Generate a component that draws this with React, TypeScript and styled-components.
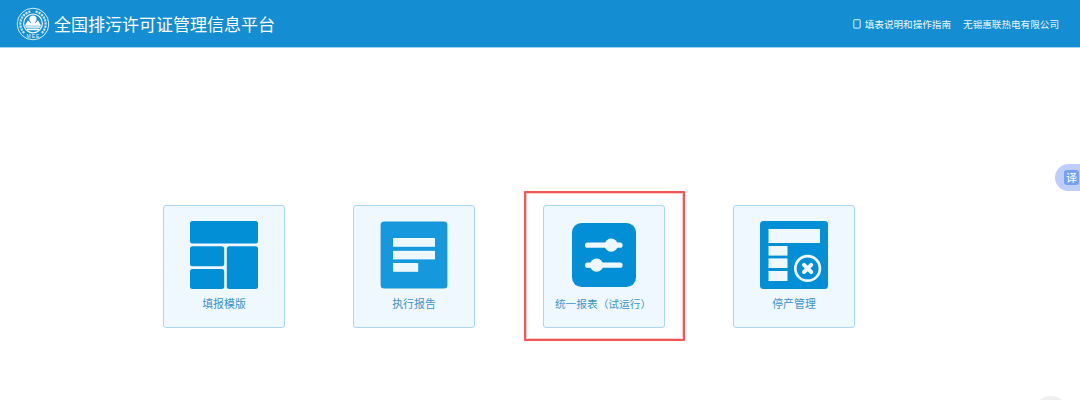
import React from 'react';
import styled, { createGlobalStyle } from 'styled-components';

// Styles
const colors = {
  header: '#148dd2',
  icon: '#028fd5',
  iconLight: '#1598dc',
  card: '#eff8fe',
  text: '#3a94cb',
  red: '#f25656',
};

const GlobalStyle = createGlobalStyle`
  body {
    margin: 0;
    background: #fff;
    font-family: 'Noto Sans CJK SC', sans-serif;
  }
`;

const Page = styled.div`
  position: relative;
  height: 400px;
  overflow: hidden;
  background: #fff;
`;

const Header = styled.header`
  display: flex;
  align-items: center;
  box-sizing: border-box;
  height: 48px;
  padding: 0 21px 0 16px;
  border-bottom: 1px solid #a5d4ee;
  background: ${colors.header};
  background-clip: padding-box;
  color: #fff;
`;

const Title = styled.h1`
  flex: 1;
  margin: 0 0 0 4px;
  font-size: 17px;
  font-weight: 400;
  line-height: 24px;
  white-space: nowrap;
`;

const HeaderLink = styled.span`
  display: flex;
  align-items: center;
  margin-left: 12px;
  color: #eef8fd;
  font-size: 9.6px;
  line-height: 14px;
  white-space: nowrap;
  svg {
    margin-right: 4px;
  }
`;

const CardList = styled.main`
  display: flex;
  gap: 68px;
  padding: 157px 0 0 163px;
`;

const Card = styled.div`
  position: relative;
  display: flex;
  flex-direction: column;
  align-items: center;
  box-sizing: border-box;
  width: 122px;
  height: 122.5px;
  padding-top: 15px;
  border: 1px solid #a9d7ef;
  border-radius: 3px;
  background: ${colors.card};
  svg {
    display: block;
  }
`;

const Label = styled.span<{ $wide?: boolean }>`
  margin-top: ${({ $wide }) => ($wide ? '7px' : '6px')};
  margin-right: ${({ $wide }) => ($wide ? '2px' : '0')};
  color: ${colors.text};
  font-size: ${({ $wide }) => ($wide ? '10.7px' : '10.9px')};
  line-height: 16px;
  white-space: nowrap;
`;

const Highlight = styled.div`
  position: absolute;
  top: -15px;
  left: -20px;
  box-sizing: border-box;
  width: 161px;
  height: 150px;
  border: 2px solid ${colors.red};
  border-radius: 1px;
  box-shadow: inset 0 0 0 1px rgba(242, 86, 86, 0.3);
`;

const Translate = styled.div`
  position: absolute;
  top: 164px;
  right: 0;
  display: flex;
  align-items: center;
  box-sizing: border-box;
  width: 25px;
  height: 27px;
  padding-left: 9px;
  border-radius: 14px 0 0 14px;
  background: #bfcdfb;
  span {
    width: 15px;
    height: 15px;
    border-radius: 3px;
    background: #74a1f2;
    color: #fff;
    font-size: 11px;
    line-height: 15px;
    text-align: center;
  }
`;

const FloatButton = styled.div`
  position: absolute;
  top: 396px;
  left: 1033px;
  width: 36px;
  height: 36px;
  border-radius: 50%;
  background: #efefef;
`;

const Logo = () => (
  <svg width="34" height="34" viewBox="0 0 34 34" fill="none">
    <circle cx="17" cy="17" r="15.8" stroke="#d5edfa" strokeWidth="1" />
    <path
      d="M8.2 26A12.6 12.6 0 0 1 14.4 4.6M19.6 4.6A12.6 12.6 0 0 1 25.8 26"
      stroke="#c6e6f7"
      strokeWidth="2.2"
      strokeDasharray="2.2 0.9"
    />
    <circle cx="17" cy="16.4" r="9.4" fill={colors.header} stroke="#eef8fd" strokeWidth="1.2" />
    <circle cx="17" cy="12" r="3.6" fill="#fff" />
    <path d="M8.8 18.8 12 13.2l2.6 2.8 2.4-4 2.4 4 2.6-2.8 3.2 5.6z" fill="#fff" />
    <path d="M9.4 20h15.2M11 22.4h12" stroke="#fff" strokeWidth="1.6" />
    <text x="17.5" y="31.4" fill="#e6f4fc" fontSize="5" fontFamily="Liberation Sans" textAnchor="middle" letterSpacing="1">
      MEE
    </text>
  </svg>
);

const TemplateIcon = () => (
  <svg width="68" height="68" viewBox="0 0 68 68" fill={colors.icon}>
    <rect width="68" height="22.6" rx="2.5" />
    <rect y="25.2" width="34.2" height="20" rx="2.5" />
    <rect y="48" width="34.2" height="20" rx="2.5" />
    <rect x="36.8" y="25.2" width="31.2" height="42.8" rx="2.5" />
  </svg>
);

const ReportIcon = () => (
  <svg width="68" height="68" viewBox="0 0 68 68" fill={colors.card}>
    <rect x="0.6" y="0.5" width="66.8" height="67" rx="3.5" fill={colors.iconLight} />
    <rect x="13" y="17" width="42" height="8.8" />
    <rect x="13" y="29.8" width="42" height="8.6" />
    <rect x="13" y="42" width="25.2" height="8.8" />
  </svg>
);

const SliderIcon = () => (
  <svg width="68" height="68" viewBox="0 0 68 68" fill={colors.card}>
    <rect x="2" y="2" width="64" height="64" rx="9.5" fill={colors.icon} />
    <rect x="15" y="21.6" width="37.6" height="5.2" rx="2.6" />
    <circle cx="41.2" cy="24.2" r="6.6" />
    <rect x="15" y="41.6" width="37.6" height="5.2" rx="2.6" />
    <circle cx="26.6" cy="44.2" r="6.6" />
  </svg>
);

const StopIcon = () => (
  <svg width="68" height="68" viewBox="0 0 68 68" fill={colors.card}>
    <rect width="68" height="68" rx="3.5" fill={colors.icon} />
    <rect x="8.5" y="8" width="51.5" height="14" />
    <rect x="8.5" y="25" width="19" height="9.6" />
    <rect x="8.5" y="37.4" width="19" height="9.6" />
    <rect x="8.5" y="50" width="19" height="10" />
    <circle cx="47.6" cy="47.4" r="12.3" fill="none" stroke={colors.card} strokeWidth="2.7" />
    <path d="m44 43.8 7.2 7.2m0-7.2L44 51" stroke={colors.card} strokeWidth="4" strokeLinecap="round" />
  </svg>
);

const BookIcon = () => (
  <svg width="8" height="10" viewBox="0 0 8 10" fill="none" stroke="#e6f4fc">
    <rect x="0.8" y="0.7" width="6.4" height="8.4" rx="0.6" />
  </svg>
);

interface MenuItem {
  label: string;
  icon: React.ReactNode;
  highlighted?: boolean;
}

const items: MenuItem[] = [
  { label: '填报模版', icon: <TemplateIcon /> },
  { label: '执行报告', icon: <ReportIcon /> },
  { label: '统一报表（试运行）', icon: <SliderIcon />, highlighted: true },
  { label: '停产管理', icon: <StopIcon /> },
];

const App: React.FC = () => {
  return (
    <Page>
      <GlobalStyle />
      <Header>
        <Logo />
        <Title>全国排污许可证管理信息平台</Title>
        <HeaderLink>
          <BookIcon />
          填表说明和操作指南
        </HeaderLink>
        <HeaderLink>无锡惠联热电有限公司</HeaderLink>
      </Header>

      <CardList>
        {items.map((item) => (
          <Card key={item.label}>
            {item.icon}
            <Label $wide={item.highlighted}>{item.label}</Label>
            {item.highlighted && <Highlight />}
          </Card>
        ))}
      </CardList>

      <Translate>
        <span>译</span>
      </Translate>
      <FloatButton />
    </Page>
  );
};

export default App;
